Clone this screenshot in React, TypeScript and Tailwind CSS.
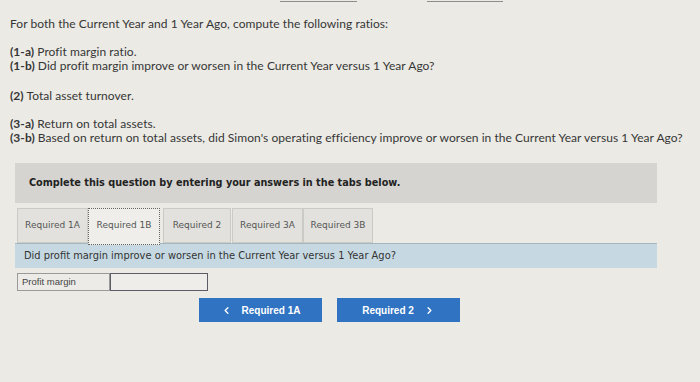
import { ChevronLeft, ChevronRight } from "lucide-react"

const tabs = [
  { label: "Required 1A", width: "w-[71px]", active: false },
  { label: "Required 1B", width: "w-[72px]", active: true },
  { label: "Required 2", width: "w-[68px] ml-[3px]", active: false },
  { label: "Required 3A", width: "w-[71px] ml-[1px]", active: false },
  { label: "Required 3B", width: "w-[70px]", active: false },
]

export default function App() {
  return (
    <div className="min-h-[382px] w-[700px] bg-[#ebeae5] text-[#363636] overflow-hidden">
      {/* bits of the previous section peeking in */}
      <div className="flex pt-[1px] h-[3px]">
        <div className="ml-[280px] w-[77px] h-[1px] bg-[#8d8d8b]" />
        <div className="ml-[70px] w-[76px] h-[1px] bg-[#8d8d8b]" />
      </div>

      <div className="pl-[10px] pt-[14px] text-[12px] leading-[14px] font-['Lato',_'Liberation_Sans',_sans-serif] [font-variant-ligatures:none] tracking-[0.05px]">
        <p>For both the Current Year and 1 Year Ago, compute the following ratios:</p>
        <p className="mt-[14px]">
          <b>(1-a)</b> Profit margin ratio.
        </p>
        <p>
          <b>(1-b)</b> Did profit margin improve or worsen in the Current Year versus 1 Year Ago?
        </p>
        <p className="mt-[16px]">
          <b>(2)</b> Total asset turnover.
        </p>
        <p className="mt-[14px]">
          <b>(3-a)</b> Return on total assets.
        </p>
        <p>
          <b>(3-b)</b> Based on return on total assets, did Simon's operating efficiency improve or worsen in the Current Year versus 1 Year Ago?
        </p>
      </div>

      <div className="ml-[15px] w-[642px] mt-[18px] font-['DejaVu_Sans',_sans-serif]">
        <div className="h-[40px] bg-[#d5d4d0] flex items-center pl-[14px] text-[9.7px] font-bold text-[#222]">
          Complete this question by entering your answers in the tabs below.
        </div>

        <div className="flex mt-[5px] pl-[2px] h-[36px] relative z-10">
          {tabs.map((t) => (
            <div
              key={t.label}
              className={
                t.active
                  ? `${t.width} h-[37px] pb-[2px] bg-[#efeeea] border border-dotted border-[#666] flex items-center justify-center text-[9px] text-[#555]`
                  : `${t.width} h-[35px] bg-[#e2e1dd] border border-[#cbcac6] flex items-center justify-center text-[9px] text-[#555]`
              }
            >
              {t.label}
            </div>
          ))}
        </div>

        <div className="h-[25px] -mt-[1px] bg-[#c6d9e2] border-t border-[#a7b6bd] flex items-center pl-[9px] text-[9.9px] text-[#333]">
          Did profit margin improve or worsen in the Current Year versus 1 Year Ago?
        </div>

        <div className="flex mt-[5px] ml-[2px] h-[18px] font-['Liberation_Sans',_sans-serif]">
          <div className="w-[93px] border border-[#9a9a98] bg-[#ecebe7] flex items-center pl-[4px] text-[9.5px] text-[#444]">
            Profit margin
          </div>
          <div className="w-[98px] border-[1.5px] border-[#5c5c66] bg-[#eeede9]" />
        </div>

        <div className="flex mt-[7px] ml-[184px] gap-[15px] font-['Liberation_Sans',_sans-serif]">
          <button className="w-[123px] h-[24px] bg-[#2f73c2] text-white text-[10px] font-bold flex items-center justify-center gap-[10px]">
            <ChevronLeft size={11} strokeWidth={3} />
            Required 1A
          </button>
          <button className="w-[123px] h-[24px] bg-[#2f73c2] text-white text-[10px] font-bold flex items-center justify-center gap-[10px]">
            Required 2
            <ChevronRight size={11} strokeWidth={3} />
          </button>
        </div>
      </div>
    </div>
  )
}
